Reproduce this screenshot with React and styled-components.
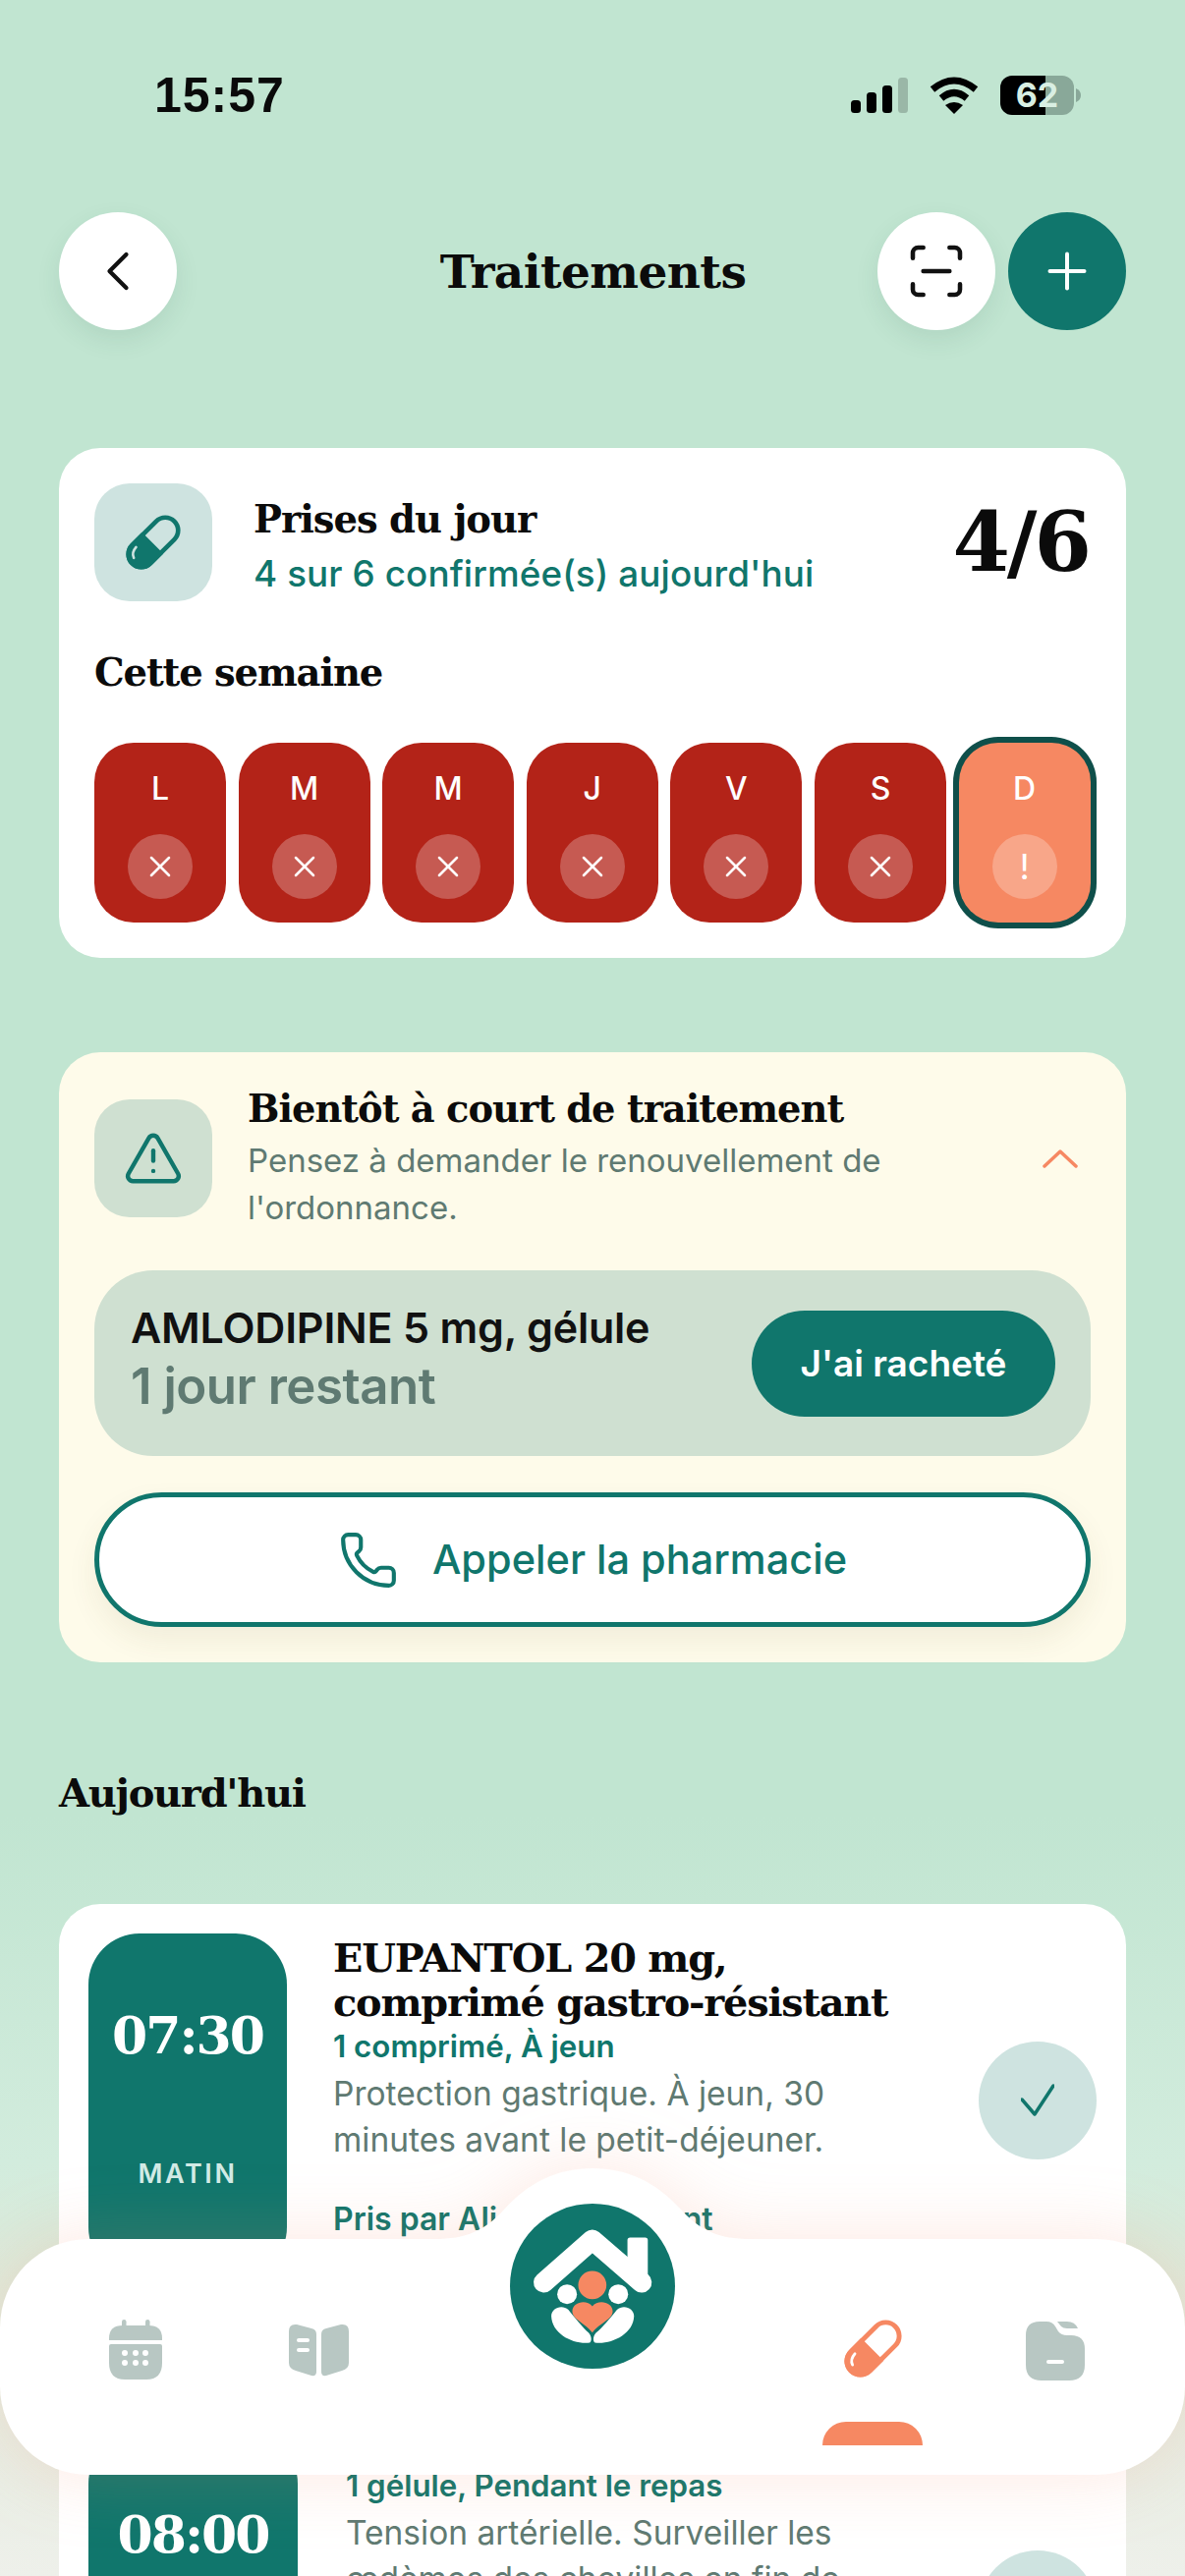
import React from 'react';
import styled, { createGlobalStyle } from 'styled-components';
import { ChevronLeft, ScanLine, Plus, X, TriangleAlert, Phone } from 'lucide-react';

const TEAL = '#10766c';
const SERIF = '"DejaVu Serif", "Liberation Serif", serif';
const SANS = 'Inter, "Liberation Sans", sans-serif';

const Global = createGlobalStyle`
  html, body { margin: 0; padding: 0; background: #c1e5d1; }
  * { box-sizing: border-box; }
`;
const Page = styled.div`
  position: relative; width: 1206px; height: 2622px; overflow: hidden; padding: 0 60px; font-family: ${SANS}; color: #111;
  background: linear-gradient(to bottom, #c1e5d1 0, #c1e5d1 1850px, #d2ecdd 2200px, #dfeadb 2330px, #eef0ea 2622px);
`;
const StatusBar = styled.div`
  height: 216px; padding: 68px 46px 0 97px; display: flex; justify-content: space-between; align-items: flex-start;
`;
const Clock = styled.div`font: 600 50px/58px "Liberation Sans", sans-serif; color: #0a0a0a; letter-spacing: 1px;`;
const StatusIcons = styled.div`display: flex; align-items: center; gap: 22px; height: 58px;`;
const BatteryGroup = styled.div`display: flex; align-items: center; gap: 2px;`;
const Battery = styled.div`
  width: 75px; height: 40px; border-radius: 12px; overflow: hidden;
  background: linear-gradient(90deg, #000 62%, #89a899 62%);
  color: #d9efe3; font: 700 34px/40px Inter, sans-serif; text-align: center;
`;
const Toolbar = styled.header`display: flex; align-items: center; height: 120px; gap: 13px;`;
const Title = styled.h1`
  flex: 1; margin: 0; text-align: center; padding-left: 134px;
  font: 700 47px/1 ${SERIF}; color: #0b0b0b; letter-spacing: -0.6px;
`;
const RoundBtn = styled.button`
  width: 120px; height: 120px; border-radius: 50%; border: 0; padding: 0; flex: none;
  display: flex; align-items: center; justify-content: center;
  background: ${p => p.$teal ? TEAL : '#fff'}; color: ${p => p.$teal ? '#fff' : '#111'};
  box-shadow: ${p => p.$teal ? 'none' : '0 10px 24px rgba(40,90,70,.10)'};
`;
const WeekCard = styled.section`
  margin-top: 120px; height: 519px; background: #fff; border-radius: 42px; padding: 36px;
`;
const SummaryRow = styled.div`display: flex; align-items: center; height: 120px;`;
const Tile = styled.div`
  width: 120px; height: 120px; border-radius: 36px; flex: none; display: flex; align-items: center; justify-content: center;
  background: ${p => p.$bg};
`;
const SummaryText = styled.div`flex: 1; margin: 8px 0 0 42px;`;
const CardTitle = styled.div`font: 700 ${p => p.$size || 38.5}px/${p => p.$lh || 46}px ${SERIF}; color: #0b0b0b; letter-spacing: -1px;`;
const Confirmed = styled.div`font: 500 36.8px/46px ${SANS}; color: ${TEAL}; margin-top: 9px; letter-spacing: .1px;`;
const Score = styled.div`font: 700 84px/1 ${SERIF}; color: #0b0b0b; letter-spacing: -3px; padding-right: 2px;`;
const WeekTitle = styled.div`font: 700 38.5px/46px ${SERIF}; color: #0b0b0b; margin-top: 50px; letter-spacing: -1.1px;`;
const Days = styled.div`display: flex; gap: 12.6px; margin-top: 48px;`;
const Day = styled.div`
  width: 134px; height: 183px; border-radius: 40px; display: flex; flex-direction: column; align-items: center;
  padding-top: 28px; color: #fff; font: 500 32px/38px ${SANS};
  background: ${p => p.$today ? '#f68862' : '#b32318'};
  box-shadow: ${p => p.$today ? '0 0 0 6px #0f4f4a' : 'none'};
`;
const DayMark = styled.div`
  width: 66px; height: 66px; border-radius: 50%; margin-top: 27px; background: rgba(255,255,255,.25);
  display: flex; align-items: center; justify-content: center; font: 400 36px/1 ${SANS};
`;
const RefillCard = styled.section`
  margin-top: 96px; height: 621px; border-radius: 42px; padding: 48px 36px 36px; background: #fefbea;
`;
const RefillHead = styled.div`display: flex; align-items: flex-start; height: 120px;`;
const RefillText = styled.div`flex: 1; margin: -13px 0 0 36px;`;
const RefillSub = styled.div`font: 400 33px/48px ${SANS}; color: #5f7a72; margin-top: 5px; width: 720px;`;
const Collapse = styled.svg`width: 36px; height: 20px; margin: 50px 13px 0 0; flex: none;`;
const StockRow = styled.div`
  margin-top: 54px; height: 189px; border-radius: 60px; background: #cfe0d1; padding: 0 36px 0 37px;
  display: flex; align-items: center; justify-content: space-between;
`;
const StockName = styled.div`font: 600 43px/48px ${SANS}; color: #111; letter-spacing: -.2px; margin-top: -8px;`;
const StockLeft = styled.div`font: 600 51px/60px ${SANS}; color: #5f7a72; margin-top: 6px; letter-spacing: -.5px;`;
const Bought = styled.button`
  width: 309px; height: 108px; border: 0; border-radius: 54px; background: ${TEAL}; color: #fff;
  font: 600 37px/1 ${SANS};
`;
const CallBtn = styled.button`
  width: 100%; height: 137px; margin-top: 37px; border: 5px solid ${TEAL}; border-radius: 69px; background: #fff;
  display: flex; align-items: center; justify-content: center; gap: 34px; color: ${TEAL};
  font: 500 41.5px/1 ${SANS}; box-shadow: 0 14px 30px rgba(90,80,40,.08);
`;
const SectionTitle = styled.h2`
  margin: 108px 0 0; font: 700 40px/50px ${SERIF}; color: #0b0b0b; letter-spacing: -1.3px;
`;
const MedCard = styled.article`
  margin-top: ${p => p.$mt}px; height: ${p => p.$h}px; background: #fff; border-radius: 42px;
  padding: 30px 30px 0; display: flex; align-items: flex-start; position: relative;
`;
const TimeBlock = styled.div`
  width: ${p => p.$w}px; height: 351px; flex: none; border-radius: 52px; background: ${TEAL}; color: #fff;
  display: flex; flex-direction: column; align-items: center;
`;
const TimeValue = styled.div`font: 700 52px/70px ${SERIF}; margin-top: 69px; letter-spacing: -2px;`;
const TimePart = styled.div`font: 600 27px/32px ${SANS}; margin-top: 90px; letter-spacing: 2.6px; color: #d2ebe6;`;
const MedBody = styled.div`flex: 1; padding-left: ${p => p.$pl}px;`;
const MedTitle = styled.div`font: 700 39.8px/45px ${SERIF}; color: #0b0b0b; letter-spacing: -1.2px; margin-top: ${p => p.$mt}px;`;
const Dose = styled.div`font: 600 31.3px/36px ${SANS}; color: ${TEAL}; margin-top: ${p => p.$mt}px;`;
const Desc = styled.div`font: 400 33.5px/47px ${SANS}; color: #5f7a72; margin-top: 7px; width: 600px;`;
const TakenBy = styled.div`font: 600 32px/40px ${SANS}; color: ${TEAL}; margin-top: 37px;`;
const Confirm = styled.div`
  position: absolute; right: 30px; top: ${p => p.$top}px; width: 120px; height: 120px; border-radius: 50%; background: #cee3e0;
  display: flex; align-items: center; justify-content: center;
`;
const Nav = styled.nav`
  position: absolute; left: 0; right: 0; bottom: 103px; height: 240px; background: #fff; border-radius: 90px;
  display: grid; grid-template-columns: 186px 186px 378px 186px 186px; padding: 82px 0 0 45px;
  filter: drop-shadow(0 0 36px rgba(246,136,98,.2));
`;
const Bump = styled.svg`position: absolute; left: 443px; top: -74px; width: 320px; height: 76px;`;
const Logo = styled.svg`position: absolute; left: 519px; top: -36px; width: 168px; height: 168px;`;
const Tab = styled.div`
  position: relative; display: flex; justify-content: center; align-items: flex-start; height: 128px; padding-top: ${p => p.$pt || 0}px;
`;
const Indicator = styled.div`
  position: absolute; bottom: 0; left: 42px; width: 102px; height: 24px; background: #f68862; border-radius: 24px 24px 0 0;
`;

const PillIcon = ({ color, size = 59, shine = '#fff' }) => (
  <svg width={size} height={size} viewBox="0 0 60 60" fill="none">
    <g transform="rotate(-45 30 30)">
      <rect x="-2.5" y="16" width="65" height="28" rx="14" stroke={color} strokeWidth="5" />
      <path d="M29 13.5H11.5A16.5 16.5 0 0 0 11.5 46.5H29Z" fill={color} />
      <path d="M3 27Q5 21 13 20.5" stroke={shine} strokeWidth="2.8" strokeLinecap="round" />
    </g>
  </svg>
);
const CalendarIcon = () => (
  <svg width="54" height="61" viewBox="0 0 54 61">
    <rect x="13" y="0" width="4.5" height="10" rx="2.2" fill="#b8c7c3" />
    <rect x="37" y="0" width="4.5" height="10" rx="2.2" fill="#b8c7c3" />
    <path d="M0 21V19Q0 6 14 6H40Q54 6 54 19V21Q54 21 52 21H2Q0 21 0 21Z" fill="#b8c7c3" />
    <path d="M0 27Q0 25 2 25H52Q54 25 54 27V44Q54 61 38 61H16Q0 61 0 44Z" fill="#b8c7c3" />
    {[16, 27, 37].map(x => [34, 44].map(y => <circle key={x + '-' + y} cx={x} cy={y} r="3" fill="#fff" />))}
  </svg>
);
const BookIcon = () => (
  <svg width="61" height="54" viewBox="0 0 61 54" fill="#b8c7c3">
    <path d="M0 8Q0 0 8 1L23 5Q28 6 28 11V49Q28 54 23 53L7 48Q0 46 0 40Z" />
    <path d="M61 8Q61 0 53 1L38 5Q33 6 33 11V49Q33 54 38 53L54 48Q61 46 61 40Z" />
    <rect x="8" y="15" width="13" height="4" rx="2" fill="#fff" />
    <rect x="8" y="25" width="13" height="4" rx="2" fill="#fff" />
  </svg>
);
const FolderIcon = () => (
  <svg width="60" height="60" viewBox="0 0 60 60" fill="#b8c7c3">
    <path d="M0 14Q0 0 14 0H21Q27 0 30 5L33 10Q36 14 42 14H46Q60 14 60 28V44Q60 60 44 60H16Q0 60 0 44Z" />
    <path d="M32 0H42Q50 0 53 7H42Q38 7 36 5Z" />
    <rect x="21" y="39" width="18" height="4" rx="2" fill="#fff" />
  </svg>
);
const BrandLogo = () => (
  <Logo viewBox="207 162 503 503">
    <circle cx="458.5" cy="413.5" r="251.5" fill={TEAL} />
    <rect x="565" y="265" width="62" height="135" rx="8" fill="#fff" />
    <path d="M310 402L458 272L608 402" fill="none" stroke="#fff" strokeWidth="62" strokeLinecap="round" strokeLinejoin="round" />
    <circle cx="458" cy="410" r="43" fill="#f68862" />
    <circle cx="381" cy="438" r="30" fill="#fff" />
    <circle cx="537" cy="438" r="30" fill="#fff" />
    <path d="M458 555C435 525 397 515 397 490C397 462 440 452 458 475C476 452 520 462 520 490C520 515 481 525 458 555Z" fill="#f68862" />
    <path d="M450 586C400 592 335 560 333 505C333 480 365 468 385 485C405 510 430 540 447 556C455 565 458 580 450 586Z" fill="#fff" />
    <path d="M466 586C516 592 583 560 585 505C585 480 553 468 533 485C513 510 488 540 469 556C461 565 458 580 466 586Z" fill="#fff" />
  </Logo>
);

const DAYS = ['L', 'M', 'M', 'J', 'V', 'S'];

export default function App() {
  return (
    <Page>
      <Global />
      <StatusBar>
        <Clock>15:57</Clock>
        <StatusIcons>
          <svg width="58" height="36" viewBox="0 0 58 36">
            <rect x="0" y="23" width="10" height="13" rx="3.5" fill="#000" />
            <rect x="16" y="15" width="10" height="21" rx="3.5" fill="#000" />
            <rect x="32" y="8" width="10" height="28" rx="3.5" fill="#000" />
            <rect x="48" y="0" width="10" height="36" rx="3.5" fill="#000" fillOpacity=".2" />
          </svg>
          <svg width="50" height="38" viewBox="0 0 50 38" fill="none" stroke="#000" strokeWidth="7">
            <path d="M3 13Q25 -5 47 13" />
            <path d="M12 22Q25 11 38 22" />
            <path d="M25 38L16 29Q25 23 34 29Z" fill="#000" stroke="none" />
          </svg>
          <BatteryGroup>
            <Battery>62</Battery>
            <svg width="5" height="14" viewBox="0 0 5 14"><path d="M0 0Q5 2 5 7Q5 12 0 14Z" fill="#89a899" /></svg>
          </BatteryGroup>
        </StatusIcons>
      </StatusBar>

      <Toolbar>
        <RoundBtn><ChevronLeft size={68} strokeWidth={1.5} /></RoundBtn>
        <Title>Traitements</Title>
        <RoundBtn><ScanLine size={64} strokeWidth={1.7} /></RoundBtn>
        <RoundBtn $teal><Plus size={60} strokeWidth={1.6} /></RoundBtn>
      </Toolbar>

      <WeekCard>
        <SummaryRow>
          <Tile $bg="#cee3e0"><PillIcon color={TEAL} size={56} shine="#cee3e0" /></Tile>
          <SummaryText>
            <CardTitle>Prises du jour</CardTitle>
            <Confirmed>4 sur 6 confirmée(s) aujourd'hui</Confirmed>
          </SummaryText>
          <Score>4/6</Score>
        </SummaryRow>
        <WeekTitle>Cette semaine</WeekTitle>
        <Days>
          {DAYS.map((d, i) => (
            <Day key={i}>{d}<DayMark><X size={36} strokeWidth={1.7} /></DayMark></Day>
          ))}
          <Day $today>D<DayMark>!</DayMark></Day>
        </Days>
      </WeekCard>

      <RefillCard>
        <RefillHead>
          <Tile $bg="#cfe0d1"><TriangleAlert size={62} color={TEAL} strokeWidth={1.7} /></Tile>
          <RefillText>
            <CardTitle $size={38.4}>Bientôt à court de traitement</CardTitle>
            <RefillSub>Pensez à demander le renouvellement de l'ordonnance.</RefillSub>
          </RefillText>
          <Collapse viewBox="0 0 36 20" fill="none"><path d="M2 18L18 3L34 18" stroke="#f68862" strokeWidth="3.5" strokeLinecap="round" strokeLinejoin="round" /></Collapse>
        </RefillHead>
        <StockRow>
          <div>
            <StockName>AMLODIPINE 5 mg, gélule</StockName>
            <StockLeft>1 jour restant</StockLeft>
          </div>
          <Bought>J'ai racheté</Bought>
        </StockRow>
        <CallBtn><Phone size={62} strokeWidth={1.6} />Appeler la pharmacie</CallBtn>
      </RefillCard>

      <SectionTitle>Aujourd'hui</SectionTitle>

      <MedCard $mt={88} $h={470}>
        <TimeBlock $w={202}>
          <TimeValue>07:30</TimeValue>
          <TimePart>MATIN</TimePart>
        </TimeBlock>
        <MedBody $pl={47}>
          <MedTitle $mt={3}>EUPANTOL 20 mg,<br />comprimé gastro-résistant</MedTitle>
          <Dose $mt={4}>1 comprimé, À jeun</Dose>
          <Desc>Protection gastrique. À jeun, 30 minutes avant le petit-déjeuner.</Desc>
          <TakenBy>Pris par Alice maintenant</TakenBy>
        </MedBody>
        <Confirm $top={140}>
          <svg width="34" height="34" viewBox="0 0 34 34" fill="none"><path d="M1 16L14 31L33 2" stroke={TEAL} strokeWidth="3.5" strokeLinecap="round" strokeLinejoin="round" /></svg>
        </Confirm>
      </MedCard>

      <MedCard $mt={38} $h={400}>
        <TimeBlock $w={213}>
          <TimeValue>08:00</TimeValue>
          <TimePart>MATIN</TimePart>
        </TimeBlock>
        <MedBody $pl={49}>
          <MedTitle $mt={-17}>AMLODIPINE 5 mg, gélule</MedTitle>
          <Dose $mt={8}>1 gélule, Pendant le repas</Dose>
          <Desc>Tension artérielle. Surveiller les œdèmes des chevilles en fin de journée.</Desc>
        </MedBody>
        <Confirm $top={150} />
      </MedCard>

      <Nav>
        <Bump viewBox="0 0 320 76"><path d="M0 74C30 74 50 66 70 44C95 16 125 2 160 2C195 2 225 16 250 44C270 66 290 74 320 74V76H0Z" fill="#fff" /></Bump>
        <BrandLogo />
        <Tab><CalendarIcon /></Tab>
        <Tab $pt={4}><BookIcon /></Tab>
        <div />
        <Tab>
          <PillIcon color="#f68862" />
          <Indicator />
        </Tab>
        <Tab $pt={2}><FolderIcon /></Tab>
      </Nav>
    </Page>
  );
}
